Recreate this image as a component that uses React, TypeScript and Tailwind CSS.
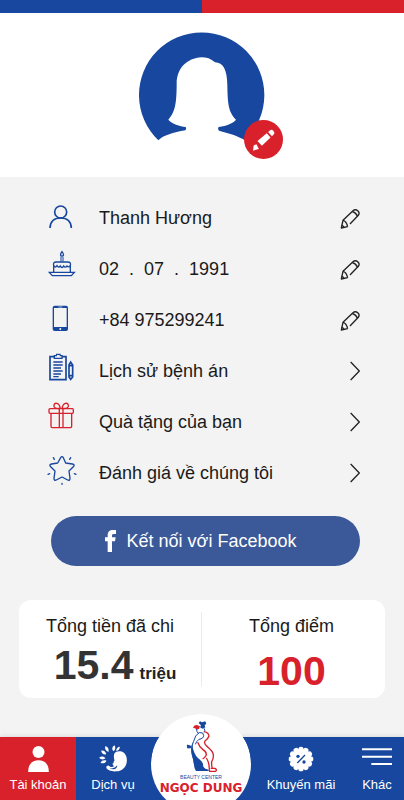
import React from 'react';

const UserIcon = () => (
  <svg viewBox="51 24 90 117" className="w-[30px] h-[39px] shrink-0" fill="none" stroke="#17479e" strokeWidth="5">
    <circle cx="92" cy="66" r="18" />
    <path d="M60 114c1-20 14-30 32-30s31 10 32 30" />
  </svg>
);

const CakeIcon = () => (
  <svg viewBox="51 177 90 117" className="w-[30px] h-[39px] shrink-0" fill="none" stroke="#17479e" strokeWidth="4">
    <path d="M96 185c4 5 6 8 4 11s-7 3-8 0 0-6 4-11z" />
    <path d="M93 200v15M99 200v15" strokeWidth="3" />
    <path d="M71 246v-19q-3-11 8-11h34q11 0 8 11v19" />
    <path d="M71 227q5 8 10 0q5 8 10 1q5 9 10 0q5 7 10 0q6 6 10-1" />
    <path d="M58 247h75l-9 10H67z" />
  </svg>
);

const PhoneIcon = () => (
  <svg viewBox="51 330 90 117" className="w-[30px] h-[39px] shrink-0">
    <rect x="68" y="347" width="46" height="76" rx="6" fill="#17479e" />
    <rect x="72" y="354" width="38" height="57" fill="#f3f3f3" />
    <circle cx="91" cy="417" r="3" fill="#f3f3f3" />
    <path d="M85 351h12" stroke="#f3f3f3" strokeWidth="2" />
  </svg>
);

const ClipboardIcon = () => (
  <svg viewBox="51 33 90 117" className="w-[30px] h-[39px] shrink-0" fill="none" stroke="#17479e" strokeWidth="5">
    <path d="M73 50H60v69h48V50H96" />
    <path d="M73 55V47h6l1-4h10l1 4h5v8z" strokeWidth="4" />
    <path d="M70 66h28M70 75h28M70 84h23M70 93h28M70 102h23M70 110h16" strokeWidth="4" />
    <path d="M117 75l5-9 6 9v36l-6 7-5-7zM117 77h11M117 107h11" />
  </svg>
);

const GiftIcon = () => (
  <svg viewBox="51 186 90 117" className="w-[30px] h-[39px] shrink-0" fill="none" stroke="#d9212c" strokeWidth="4" strokeLinejoin="round">
    <rect x="57" y="206" width="73" height="14" rx="3" />
    <path d="M63 220v39q0 4 4 4h54q4 0 4-4v-39M88 206v57M99 206v57" />
    <path d="M91 205C76 207 70 202 72 195s15-9 19 10zM96 205c15 2 21-3 19-10s-15-9-19 10z" />
  </svg>
);

const StarIcon = () => (
  <svg viewBox="51 339 90 117" className="w-[30px] h-[39px] shrink-0" fill="none" stroke="#17479e" strokeWidth="4" strokeLinecap="round" strokeLinejoin="round">
    <path d="M92 353q4-6 8 0l7 16 20 3q9 2 3 8l-13 13 3 22q0 8-7 5l-17-9-17 9q-7 3-7-5l3-22-13-13q-6-6 3-8l18-3z" />
    <path d="M70 353l3 5M122 353l-3 5M54 403l5-2M138 403l-5-2M96 430v3" />
  </svg>
);

const PencilIcon = () => (
  <svg viewBox="0 0 60 60" className="w-5 h-5" fill="none" stroke="#222" strokeWidth="4" strokeLinejoin="round">
    <path d="M30 45L55 19q5-7-1-13-8-7-15-1L9 34 4 57l19-4" />
    <path d="M9 34q10 2 14 19M37 8q10 2 16 14M5 49q5 1 7 6" />
  </svg>
);

const ChevronIcon = () => (
  <svg viewBox="0 0 30 60" className="w-[10px] h-5" fill="none" stroke="#222" strokeWidth="4">
    <path d="M2 3l26 27L2 57" />
  </svg>
);

const ServiceIcon = () => (
  <svg viewBox="300 139 86 81" className="w-[29px] h-[27px]" fill="#fff">
    <path d="M346 164c3-5 10-7 17-6 14 2 21 14 20 29-1 17-13 31-31 31-14 1-26-2-30-9-2-5 2-9 7-8 5 5 11 4 16 2-4-2-2-5-6-8l5-2c-2-4 0-6 2-7-2-8-3-15 0-22z" />
    <path d="M331 208c9 3 17 0 23-8 1 5-2 8-5 10-6 3-13 2-18-2z" fill="#17479e" />
    <path d="M318 143c8 1 12 8 10 17-8-3-12-9-10-17zM343 158c-6-6-5-13 3-18 4 7 3 13-3 18zM351 157c0-8 5-13 11-13 0 7-4 12-11 13zM306 156c9-1 14 4 15 11-8 1-14-3-15-11zM300 177c7-5 14-4 19 2-6 5-14 4-19-2zM304 192c4-7 10-9 18-6-3 7-10 10-18 6z" />
  </svg>
);

const PromoIcon = () => (
  <svg viewBox="-38 -39 76 78" className="w-[26px] h-[26px]">
    <g fill="#fff">
      <circle r="31" />
      {[0, 30, 60, 90, 120, 150, 180, 210, 240, 270, 300, 330].map((deg) => (
        <circle key={deg} cx="29" r="8" transform={`rotate(${deg})`} />
      ))}
    </g>
    <path d="M-11 12L12-12" stroke="#17479e" strokeWidth="4" />
    <circle cx="-9" cy="-8" r="5" fill="#17479e" />
    <circle cx="9" cy="9" r="5" fill="#17479e" />
  </svg>
);

const LogoFigure = () => (
  <svg viewBox="130 63 99 159" className="w-[33px] h-[53px]" fill="none">
    <path d="M171 72l4-5 6 3 10-3 3 8-5 3 2 7-8 4-8-4 3-6z" fill="#17479e" />
    <path d="M154 87q3-11 14-8l7 3-3 8-9 2-2-4z" fill="#d9212c" />
    <path d="M165 90q-1 9 6 14M187 88q5 6 0 12" stroke="#17479e" strokeWidth="3" />
    <path d="M174 99q-15 10-18 28c-6 13-8 29-2 45 3 17 4 31 14 44" stroke="#17479e" strokeWidth="3" />
    <path d="M153 128c-7 20-5 36 1 52 4 14 2 27 9 36h38v-4q-12-2-16-9 0-14-10-21-14-10-19-27-5-12-3-27z" fill="#17479e" />
    <path d="M148 142l-11-4 1 9 10-1z" stroke="#17479e" strokeWidth="3" fill="#17479e" />
    <path d="M188 98q13 3 14 13-2 7-12 15-4 7 5 15c8 9 20 16 20 27q1 12-5 20-1 10 2 21" stroke="#d9212c" strokeWidth="4" />
    <path d="M168 130q5 14 15 21 14 9 10 19-5 7-10 10M194 177q9 14 9 33l1 7h18q5-5-2-9h-13" stroke="#d9212c" strokeWidth="4" />
    <path d="M174 101q12-2 12 8t-14 12q-8 6-11 15" stroke="#17479e" strokeWidth="3" />
  </svg>
);

const editableRows = [
  { icon: <UserIcon />, label: 'Sửa họ tên', value: 'Thanh Hương' },
  {
    icon: <CakeIcon />,
    label: 'Sửa ngày sinh',
    value: (
      <span className="flex gap-[10px]">
        <span>02</span>
        <span>.</span>
        <span>07</span>
        <span>.</span>
        <span>1991</span>
      </span>
    ),
  },
  { icon: <PhoneIcon />, label: 'Sửa số điện thoại', value: '+84 975299241' },
];

const linkRows = [
  { icon: <ClipboardIcon />, href: '#history', text: 'Lịch sử bệnh án' },
  { icon: <GiftIcon />, href: '#gifts', text: 'Quà tặng của bạn' },
  { icon: <StarIcon />, href: '#reviews', text: 'Đánh giá về chúng tôi' },
];

const navItem = 'flex flex-col items-center justify-end gap-1 pb-[6px] text-[13px] leading-[18px] text-white whitespace-nowrap';

const App: React.FC = () => {
  return (
    <div className="min-h-screen flex flex-col bg-[#f3f3f3] text-[#1a1a1a] font-['Liberation_Sans',Arial,sans-serif]">
      <header className="bg-white flex flex-col items-center pb-9">
        <div className="flex w-full h-[13px]">
          <div className="flex-1 bg-[#17479e]" />
          <div className="flex-1 bg-[#d9212c]" />
        </div>
        <div className="relative mt-[19px]">
          <svg viewBox="57 95 378 327" className="w-[126px] h-[109px]" fill="#17479e">
            <path d="M115 420A188 188 0 1 1 375 420C355 407 325 398 297 391Q292 385 296 380C320 377 340 368 348 358C325 335 323 310 322 255C321 208 310 187 285 186C272 175 260 171 245 171C200 173 170 205 170 250C170 310 165 335 145 358C155 370 180 378 197 380Q200 385 196 390C160 396 130 405 115 420Z" />
          </svg>
          <button aria-label="Đổi ảnh đại diện" className="absolute -right-[18px] -bottom-[18px] w-[39px] h-[39px] rounded-full bg-[#d9212c] flex items-center justify-center">
            <svg viewBox="397 387 64 64" className="w-[22px] h-[22px]" fill="#fff">
              <path d="M441 396l7-6q4-3 8 2l3 5q1 3-2 6l-5 5zM437 399l11 13-25 24-13-14zM407 431l7 14-17 5 2-15z" />
            </svg>
          </button>
        </div>
      </header>

      <main className="flex-1 pt-[15px] pb-9">
        <ul className="pl-[47px] pr-[44px] text-lg">
          {editableRows.map((row) => (
            <li key={row.label} className="h-[51px] flex items-center gap-[22px]">
              {row.icon}
              <span className="flex-1">{row.value}</span>
              <button aria-label={row.label} className="pt-[2px]">
                <PencilIcon />
              </button>
            </li>
          ))}
          {linkRows.map((row) => (
            <li key={row.href}>
              <a href={row.href} className="h-[51px] flex items-center gap-[22px]">
                {row.icon}
                <span className="flex-1">{row.text}</span>
                <ChevronIcon />
              </a>
            </li>
          ))}
        </ul>

        <div className="pl-[51px] pr-[44px] mt-[18px]">
          <button className="w-full h-[50px] rounded-full bg-[#3b5998] text-white text-lg flex items-center justify-center gap-[11px] pr-[10px]">
            <svg viewBox="0 0 33 66" className="w-[11px] h-[22px]" fill="#fff">
              <path d="M8 66V34H0V22h8v-6C8 5 14 0 24 0h9v12h-6c-5 0-6 2-6 6v4h11l-2 12h-9v32z" />
            </svg>
            Kết nối với Facebook
          </button>
        </div>

        <section className="mx-[19px] mt-[34px] rounded-xl bg-white grid grid-cols-2 py-3">
          <div className="border-r border-[#ececec] text-center">
            <p className="text-lg leading-7">Tổng tiền đã chi</p>
            <p className="mt-[10px] pl-[10px] text-[41px] leading-[30px] font-bold text-[#333] whitespace-nowrap">
              15.4<span className="ml-[6px] text-[17px] leading-none text-[#222]">triệu</span>
            </p>
          </div>
          <div className="pr-1 text-center">
            <p className="text-lg leading-7">Tổng điểm</p>
            <p className="mt-4 text-[41px] leading-[30px] font-bold text-[#d9212c]">100</p>
          </div>
        </section>
      </main>

      <nav className="sticky bottom-0 h-[63px] grid grid-cols-[76fr_74fr_102fr_98fr_54fr] bg-[#17479e] shadow-[0_-1px_4px_rgba(0,0,0,0.1)]">
        <a href="#account" className={`${navItem} bg-[#d9212c]`}>
          <svg viewBox="0 0 62 78" className="w-[21px] h-[26px]" fill="#fff">
            <circle cx="31" cy="18" r="18" />
            <path d="M0 78C0 54 12 43 31 43s31 11 31 35z" />
          </svg>
          Tài khoản
        </a>
        <a href="#services" className={navItem}>
          <ServiceIcon />
          Dịch vụ
        </a>
        <div className="relative">
          <a
            href="#home"
            className="absolute bottom-0 left-1/2 -translate-x-1/2 w-[100px] h-[86px] rounded-t-[50px] overflow-hidden flex justify-center"
          >
            <span className="w-[100px] h-[100px] shrink-0 rounded-full bg-white flex flex-col items-center pt-[6px]">
              <LogoFigure />
              <span className="mt-px text-[5px] leading-[6px] text-[#17479e] whitespace-nowrap">BEAUTY CENTER</span>
              <span className="text-[12px] leading-[16px] font-bold text-[#d9212c] whitespace-nowrap font-['DejaVu_Sans',sans-serif]">NGỌC DUNG</span>
            </span>
          </a>
        </div>
        <a href="#promotions" className={navItem}>
          <PromoIcon />
          Khuyến mãi
        </a>
        <a href="#more" className={navItem}>
          <svg viewBox="0 0 90 78" className="w-[30px] h-[26px]" stroke="#fff" strokeWidth="6">
            <path d="M0 10h90M0 32h90M28 54h62" />
          </svg>
          Khác
        </a>
      </nav>
    </div>
  );
};

export default App;
